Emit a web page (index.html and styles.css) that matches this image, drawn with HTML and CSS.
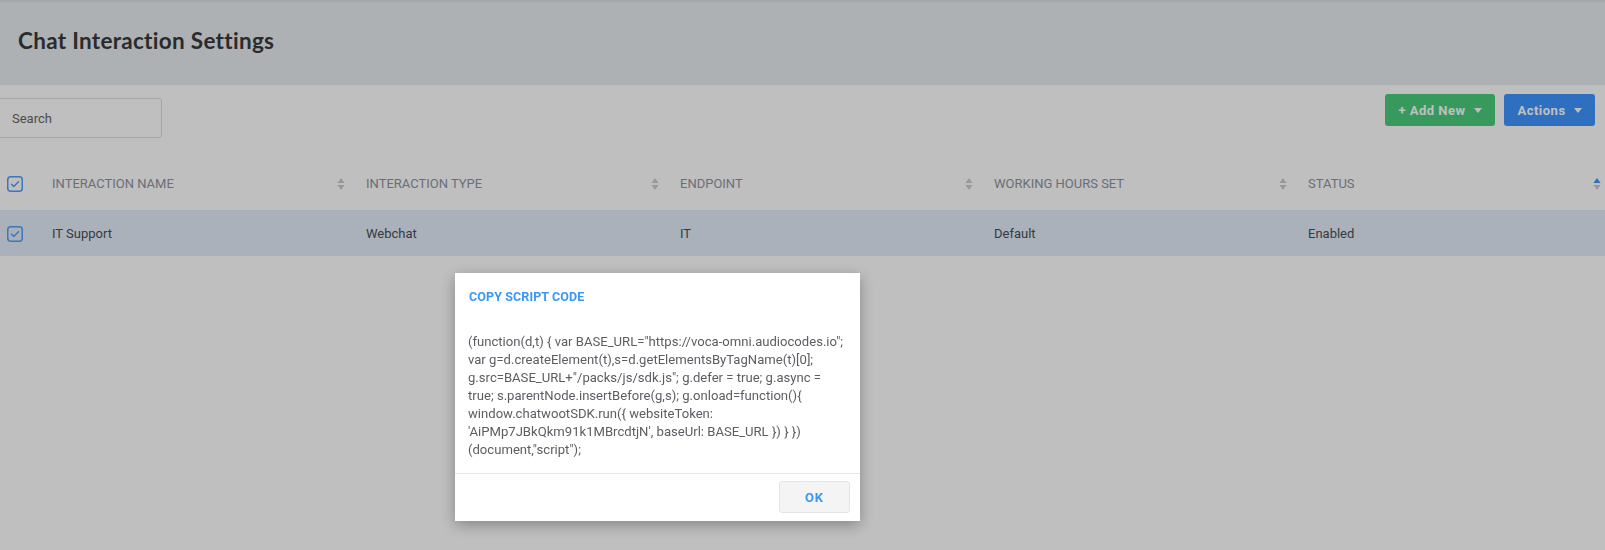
FILE: index.html
```html
<!DOCTYPE html>
<html lang="en">
<head>
  <meta charset="UTF-8">
  <meta name="viewport" content="width=device-width, initial-scale=1.0">
  <title>Chat Interaction Settings</title>
  <link rel="stylesheet" href="styles.css">
</head>
<body>

  <div class="page-header">
    <h1>Chat Interaction Settings</h1>
  </div>

  <div class="toolbar">
    <input class="search" type="text" placeholder="Search">
    <div class="toolbar-buttons">
      <button class="btn btn-green">+ Add New <span class="caret"></span></button>
      <button class="btn btn-blue">Actions <span class="caret"></span></button>
    </div>
  </div>

  <table class="grid">
    <thead>
      <tr>
        <th class="col-check">
          <svg class="check" width="16" height="16" viewBox="0 0 16 16"><rect x="0.75" y="0.75" width="14.5" height="14.5" rx="3" fill="none" stroke="#519ffa" stroke-width="1.5"/><path d="M4.5 8.2l2.3 2.3 4.7-4.8" fill="none" stroke="#519ffa" stroke-width="1.5" stroke-linecap="round" stroke-linejoin="round"/></svg>
        </th>
        <th><div class="th-in">Interaction Name <svg class="sort" width="8" height="14" viewBox="0 0 8 14"><path d="M4 1L7.5 6H0.5z" fill="#ccc"/><path d="M4 13L7.5 8H0.5z" fill="#ccc"/></svg></div></th>
        <th><div class="th-in">Interaction Type <svg class="sort" width="8" height="14" viewBox="0 0 8 14"><path d="M4 1L7.5 6H0.5z" fill="#ccc"/><path d="M4 13L7.5 8H0.5z" fill="#ccc"/></svg></div></th>
        <th><div class="th-in">Endpoint <svg class="sort" width="8" height="14" viewBox="0 0 8 14"><path d="M4 1L7.5 6H0.5z" fill="#ccc"/><path d="M4 13L7.5 8H0.5z" fill="#ccc"/></svg></div></th>
        <th><div class="th-in">Working Hours Set <svg class="sort" width="8" height="14" viewBox="0 0 8 14"><path d="M4 1L7.5 6H0.5z" fill="#ccc"/><path d="M4 13L7.5 8H0.5z" fill="#ccc"/></svg></div></th>
        <th><div class="th-in">Status <svg class="sort" width="8" height="14" viewBox="0 0 8 14"><path d="M4 1L7.5 6H0.5z" fill="#3f94ff"/><path d="M4 13L7.5 8H0.5z" fill="#ccc"/></svg></div></th>
      </tr>
    </thead>
    <tbody>
      <tr class="selected">
        <td class="col-check">
          <svg class="check" width="16" height="16" viewBox="0 0 16 16"><rect x="0.75" y="0.75" width="14.5" height="14.5" rx="3" fill="none" stroke="#519ffa" stroke-width="1.5"/><path d="M4.5 8.2l2.3 2.3 4.7-4.8" fill="none" stroke="#519ffa" stroke-width="1.5" stroke-linecap="round" stroke-linejoin="round"/></svg>
        </td>
        <td>IT Support</td>
        <td>Webchat</td>
        <td>IT</td>
        <td>Default</td>
        <td>Enabled</td>
      </tr>
    </tbody>
  </table>

  <div class="backdrop">
    <div class="modal">
      <div class="modal-title">Copy Script Code</div>
      <div class="modal-body">(function(d,t) { var BASE_URL="https://voca&#8209;omni.audiocodes.io"; var g=d.createElement(t),s=d.getElementsByTagName(t)[0]; g.src=BASE_URL+"/packs/js/sdk.js"; g.defer = true; g.async = true; s.parentNode.insertBefore(g,s); g.onload=function(){ window.chatwootSDK.run({ websiteToken: 'AiPMp7JBkQkm91k1MBrcdtjN', baseUrl: BASE_URL }) } })(document,"script");</div>
      <div class="modal-footer">
        <button class="btn-ok">OK</button>
      </div>
    </div>
  </div>

</body>
</html>
```

FILE: styles.css
```css
body {
  margin: 0;
  width: 1605px;
  height: 550px;
  overflow: hidden;
  font-family: Roboto, "Liberation Sans", sans-serif;
  background-color: #fff;
  color: #333;
}
.page-header {
  height: 85px;
  box-sizing: border-box;
  border-top: 2px solid #dbe0e4;
  background-color: #e7ecf0;
  display: flex;
  align-items: center;
  padding: 0 0 7px 18px;
}
h1 {
  margin: 0;
  font-family: Lato, "Open Sans", sans-serif;
  font-size: 22.5px;
  font-weight: 700;
  color: #3a3a3a;
  letter-spacing: 0.3px;
}
.toolbar {
  display: flex;
  justify-content: space-between;
  align-items: flex-start;
  padding: 9px 10px 0 0;
}
.search {
  margin: 4px 0 0 -3px;
  width: 165px;
  height: 40px;
  box-sizing: border-box;
  border: 1px solid #dcdcdc;
  border-radius: 3px;
  padding: 0 0 0 14px;
  font-family: Roboto, sans-serif;
  font-size: 13px;
  color: #555;
  background: #fff;
}
.search::placeholder {
  color: #666;
}
.toolbar-buttons {
  display: flex;
  gap: 9px;
}
.btn {
  height: 32px;
  border: none;
  border-radius: 3px;
  color: #fff;
  font-family: Roboto, sans-serif;
  font-size: 13px;
  font-weight: 700;
  letter-spacing: 0.5px;
  display: flex;
  align-items: center;
  justify-content: center;
  gap: 8px;
}
.btn-green {
  width: 110px;
  background-color: #4acd7b;
}
.btn-blue {
  width: 91px;
  background-color: #3f94ff;
}
.caret {
  width: 0;
  height: 0;
  border-left: 4px solid transparent;
  border-right: 4px solid transparent;
  border-top: 5px solid #fff;
}
.grid {
  margin-top: 24px;
  border-collapse: collapse;
  table-layout: fixed;
  width: 1607px;
}
.grid th,
.grid td {
  width: 314px;
  height: 46px;
  padding: 0 0 0 15px;
  box-sizing: border-box;
  text-align: left;
  font-size: 13px;
}
.grid th {
  height: 48px;
  padding-bottom: 5px;
  font-weight: 400;
  text-transform: uppercase;
  color: #8e939f;
}
.grid .col-check {
  width: 37px;
  padding-left: 7px;
}
.th-in {
  display: flex;
  justify-content: space-between;
  align-items: center;
  padding-right: 6px;
}
.check {
  display: block;
  margin-top: 1px;
}
.grid td {
  color: #4a4e55;
}
.selected {
  background-color: #e3edf9;
}
.backdrop {
  position: fixed;
  inset: 0;
  background-color: rgba(0, 0, 0, 0.25);
  padding: 273px 0 0 455px;
}
.modal {
  width: 405px;
  background: #fff;
  box-shadow: 0 4px 14px rgba(0, 0, 0, 0.3);
}
.modal-title {
  padding: 16px 14px 0;
  font-size: 12.5px;
  font-weight: 700;
  text-transform: uppercase;
  color: #3a97f5;
  letter-spacing: 0.1px;
}
.modal-body {
  padding: 29px 13px 14px 13px;
  font-size: 13.1px;
  line-height: 18px;
  color: #5a5d62;
  word-wrap: break-word;
}
.modal-footer {
  border-top: 1px solid #e5e5e5;
  display: flex;
  justify-content: flex-end;
  padding: 7px 10px 8px;
}
.btn-ok {
  width: 71px;
  height: 32px;
  background: #f4f4f4;
  border: 1px solid #e4e4e4;
  border-radius: 3px;
  color: #3a97f5;
  font-family: Roboto, sans-serif;
  font-size: 13px;
  font-weight: 700;
  letter-spacing: 1px;
}
```
